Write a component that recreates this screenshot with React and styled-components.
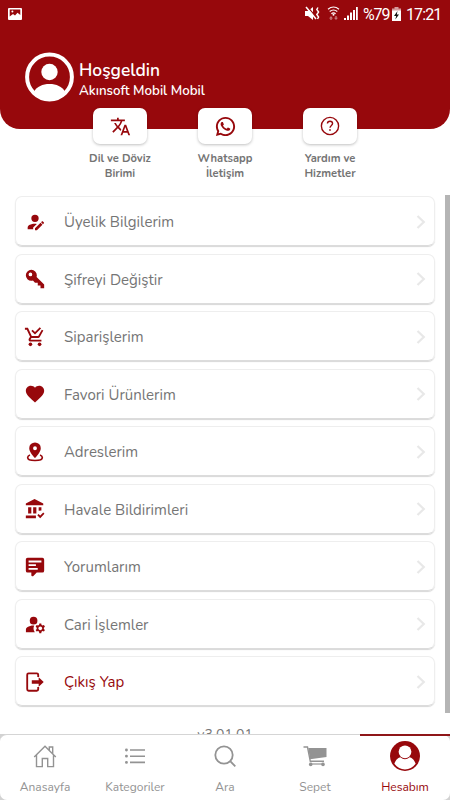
import styled, { createGlobalStyle } from 'styled-components';
import { MdTranslate, MdManageAccounts } from 'react-icons/md';
import { RiWhatsappLine } from 'react-icons/ri';

const red = '#97080c';

const GlobalStyle = createGlobalStyle`
  * {
    box-sizing: border-box;
  }

  body {
    margin: 0;
    background: #fff;
    font-family: Nunito, Lato, 'Noto Sans', sans-serif;
  }
`;

const Screen = styled.div`
  display: flex;
  flex-direction: column;
  width: 450px;
  height: 800px;
  overflow: hidden;
  background: #fff;
`;

const Header = styled.header`
  flex: none;
  height: 129px;
  background: ${red};
  border-radius: 0 0 20px 20px;
  color: #fff;
`;

const StatusBar = styled.div`
  display: flex;
  justify-content: space-between;
  height: 28px;
  padding: 0 9px 0 8px;
  font-family: Roboto, sans-serif;
  font-size: 16px;
  line-height: 28px;

  svg {
    display: block;
  }
`;

const StatusGroup = styled.div`
  display: flex;
  align-items: center;
`;

const StatusText = styled.span`
  width: ${(props) => props.$width}px;
  letter-spacing: ${(props) => props.$track}px;
  margin-left: ${(props) => props.$gap}px;
  padding-top: 1px;
  white-space: nowrap;
`;

const Welcome = styled.div`
  display: flex;
  align-items: center;
  gap: 5px;
  padding: 24px 0 0 25px;

  h1,
  p {
    margin: 0;
    white-space: nowrap;
  }

  h1 {
    padding-top: 4px;
    font-size: 17.4px;
    font-weight: 600;
    line-height: 22px;
  }

  p {
    padding-top: 1px;
    font-size: 13.3px;
    font-weight: 600;
    line-height: 18px;
  }
`;

const Shortcuts = styled.nav`
  display: flex;
  flex: none;
  justify-content: center;
  gap: 15px;
  height: 87px;
  margin-top: -21px;
`;

const Shortcut = styled.div`
  display: flex;
  flex-direction: column;
  align-items: center;
  width: 90px;
  color: #747474;
  font-size: 11.2px;
  font-weight: 700;
  line-height: 15px;
  text-align: center;
`;

const ShortcutButton = styled.div`
  display: flex;
  align-items: center;
  justify-content: center;
  width: 54px;
  height: 36px;
  margin-bottom: 7px;
  border-radius: 7px;
  background: #fff;
  box-shadow: 0 1px 3px rgba(0, 0, 0, 0.25);
  color: ${red};
`;

const Content = styled.main`
  display: flex;
  flex: none;
  justify-content: space-between;
  height: 539px;
  padding-left: 15px;
  overflow: hidden;
`;

const Menu = styled.div`
  display: flex;
  flex-direction: column;
  gap: 7.5px;
  width: 420px;
  padding-top: 1px;
`;

const MenuItem = styled.div`
  display: flex;
  flex: none;
  align-items: center;
  height: 50px;
  padding: 1px 8px 0 9px;
  border: 1px solid #eee;
  border-bottom-color: #dcdcdc;
  border-radius: 7px;
  box-shadow: 0 1px 1px rgba(0, 0, 0, 0.16);
  color: ${(props) => (props.$active ? red : '#757575')};
  font-size: 15px;

  > svg:first-child {
    flex: none;
    margin-left: -1px;
    color: ${red};
  }
`;

const MenuLabel = styled.span`
  flex: 1;
  margin-left: 18px;
  padding-top: 1px;
`;

const Version = styled.div`
  margin-top: 12px;
  color: #777;
  font-size: 14px;
  line-height: 18px;
  text-align: center;
`;

const Scrollbar = styled.div`
  width: 5px;
  height: 518px;
  background: #b5b5b5;
`;

const TabBar = styled.footer`
  display: flex;
  flex: none;
  height: 66px;
  border-top: 1px solid #d5d5d5;
  border-radius: 7px;
  background: #fff;
  box-shadow: 0 0 0 8px #d2d2d2;
  clip-path: inset(0);
`;

const Tab = styled.div`
  display: flex;
  flex-direction: column;
  align-items: center;
  width: 90px;
  margin-top: -1px;
  border-top: 2px solid ${(props) => (props.$active ? '#8f1619' : '#d5d5d500')};
  color: ${(props) => (props.$active ? red : '#939393')};
  font-size: 12px;
  line-height: 16px;
`;

const TabIcon = styled.div`
  display: flex;
  align-items: center;
  justify-content: center;
  height: 40px;
  margin-bottom: 3px;
`;

const Icon = ({ size = 22, children, ...rest }) => (
  <svg width={size} height={size} viewBox='0 0 24 24' fill='currentColor' {...rest}>
    {children}
  </svg>
);

const line = { fill: 'none', stroke: 'currentColor' };

const menuItems = [
  {
    label: 'Üyelik Bilgilerim',
    icon: (
      <path d='M21.7,13.35L20.7,14.35L18.65,12.3L19.65,11.3C19.86,11.09 20.21,11.09 20.42,11.3L21.7,12.58C21.91,12.79 21.91,13.14 21.7,13.35M12,18.94L18.06,12.88L20.11,14.93L14.06,21H12V18.94M12,14C7.58,14 4,15.79 4,18V20H10V18.11L14,14.11C13.34,14.03 12.67,14 12,14M12,4A4,4 0 0,0 8,8A4,4 0 0,0 12,12A4,4 0 0,0 16,8A4,4 0 0,0 12,4Z' />
    ),
  },
  {
    label: 'Şifreyi Değiştir',
    icon: (
      <path d='M22,18V22H18V19H15V16H12L9.74,13.74C9.19,13.91 8.61,14 8,14A6,6 0 0,1 2,8A6,6 0 0,1 8,2A6,6 0 0,1 14,8C14,8.61 13.91,9.19 13.74,9.74L22,18M7,5A2,2 0 0,0 5,7A2,2 0 0,0 7,9A2,2 0 0,0 9,7A2,2 0 0,0 7,5Z' />
    ),
  },
  {
    label: 'Siparişlerim',
    icon: (
      <>
        <path d='M7.2 14.8V14.7L8.1 13H15.5C16.2 13 16.9 12.6 17.2 12L21.1 5L19.4 4L15.5 11H8.5L4.3 2H1V4H3L6.6 11.6L5.2 14C5.1 14.3 5 14.6 5 15C5 16.1 5.9 17 7 17H19V15H7.4C7.3 15 7.2 14.9 7.2 14.8M12 9.3L8 5.4L9.4 4L12 6.6L17.2 1.4L18.6 2.8Z' />
        <circle cx='7' cy='20' r='2' />
        <circle cx='17' cy='20' r='2' />
      </>
    ),
  },
  {
    label: 'Favori Ürünlerim',
    icon: (
      <path d='M12,21.35L10.55,20.03C5.4,15.36 2,12.27 2,8.5C2,5.41 4.42,3 7.5,3C9.24,3 10.91,3.81 12,5.08C13.09,3.81 14.76,3 16.5,3C19.58,3 22,5.41 22,8.5C22,12.27 18.6,15.36 13.45,20.03L12,21.35Z' />
    ),
  },
  {
    label: 'Adreslerim',
    icon: (
      <>
        <path
          fillRule='evenodd'
          d='M12 1.5A6.3 6.3 0 0 0 5.7 7.8C5.7 12.5 12 18.5 12 18.5S18.3 12.5 18.3 7.8A6.3 6.3 0 0 0 12 1.5ZM12 5.8A2.1 2.1 0 1 1 12 10A2.1 2.1 0 0 1 12 5.8Z'
        />
        <path
          {...line}
          strokeWidth='1.8'
          d='M6.5 15.2C4.5 16 4 17.2 4 18C4 20 7.5 21.3 12 21.3S20 20 20 18C20 17.2 19.5 16 17.5 15.2'
        />
      </>
    ),
  },
  {
    label: 'Havale Bildirimleri',
    icon: (
      <path d='M11.5 1L2 6V8H21V6ZM4.5 10H8V17H4.5ZM10 10H13.5V17H10ZM16 10H19V13.5L16 14ZM2 19H13V22H2ZM17.7 22L14.5 18.8L15.9 17.4L17.7 19.2L21 15.8L22.3 17.3Z' />
    ),
  },
  {
    label: 'Yorumlarım',
    icon: (
      <path d='M9,22A1,1 0 0,1 8,21V18H4A2,2 0 0,1 2,16V4C2,2.89 2.9,2 4,2H20A2,2 0 0,1 22,4V16A2,2 0 0,1 20,18H13.9L10.2,21.71C10,21.9 9.75,22 9.5,22H9M5,5V7H19V5H5M5,9V11H13V9H5M5,13V15H15V13H5Z' />
    ),
  },
  { label: 'Cari İşlemler', custom: <MdManageAccounts size={23} style={{ marginRight: -1 }} /> },
  {
    label: 'Çıkış Yap',
    active: true,
    icon: (
      <>
        <path {...line} strokeWidth='2' d='M15.5 6.5V4Q15.5 2.5 14 2.5H5Q3.5 2.5 3.5 4V20Q3.5 21.5 5 21.5H14Q15.5 21.5 15.5 20V17.5' />
        <path d='M8.5 10H16V6.8L21.5 12L16 17.2V14H8.5Z' />
      </>
    ),
  },
];

const tabs = [
  {
    label: 'Anasayfa',
    icon: (
      <Icon size={24} {...line} strokeWidth='1.4'>
        <path d='M1.2 13L12 2.2L22.8 13M3.5 11V22.6H9.3V14.5H14.7V22.6H20.5V11M16.3 6.5V3H19.7V9.5' />
      </Icon>
    ),
  },
  {
    label: 'Kategoriler',
    icon: (
      <Icon size={24} {...line} strokeWidth='1.6'>
        <path d='M7 6H22M7 12.2H22M7 18.4H22' />
        <path strokeWidth='2.8' strokeLinecap='round' d='M3.4 6H3.5M3.4 12.2H3.5M3.4 18.4H3.5' />
      </Icon>
    ),
  },
  {
    label: 'Ara',
    icon: (
      <Icon size={24} {...line} strokeWidth='1.8'>
        <circle cx='11' cy='11' r='8.7' />
        <path d='M17.2 17.2L22.3 22.3' />
      </Icon>
    ),
  },
  {
    label: 'Sepet',
    icon: (
      <Icon size={24}>
        <path d='M5.3 4H23.5V13L7 15.2Z' />
        <path {...line} strokeWidth='1.4' d='M.5 3H4.5L7.3 17.3H21' />
        <circle cx='7.7' cy='20.4' r='1.8' />
        <circle cx='20' cy='20.4' r='1.8' />
        <path {...line} strokeWidth='1.2' d='M8 20H20' />
      </Icon>
    ),
  },
  {
    label: 'Hesabım',
    active: true,
    icon: (
      <Icon size={30}>
        <circle cx='12' cy='12' r='12' />
        <path fill='#fff' d='M3.5 18.2C4.6 14.7 7 13.2 8.3 13Q12 16.1 15.7 13C17 13.2 19.4 14.7 20.5 18.2C18.2 21.2 15.4 22.7 12 22.7S5.8 21.2 3.5 18.2Z' />
        <circle cx='12' cy='8.6' r='5.1' fill='#fff' />
      </Icon>
    ),
  },
];

const StatusIcons = () => (
  <svg width='53' height='16' viewBox='0 0 53 16' fill='#fff'>
    <path d='M0 5H3L8 1V14L3 10H0Z' />
    <path stroke={red} strokeWidth='1.2' d='M2.5 1L12 12' />
    <path stroke='#fff' strokeWidth='1.5' d='M1 1L11 13' />
    <path fill='none' stroke='#fff' strokeWidth='1.4' d='M13 1.5L11.8 3.5L13.6 6L11.8 8.5L13.6 11L12.5 13' />
    <g fill='none' stroke='#fff' strokeWidth='1.2'>
      <path d='M23 3.2Q28.5 -1.2 34 3.2M24.7 5.5Q28.5 2.5 32.3 5.5M26.4 7.7Q28.5 6 30.6 7.7' />
    </g>
    <circle cx='28.5' cy='8.8' r='1' />
    <path opacity='.45' d='M26 10L28 12.4H26.7V14H25.3V12.4H24ZM30.3 10H31.7V11.7H33L31 14L29 11.7H30.3Z' />
    <path d='M39 12H41V14H39ZM42 9.5H44V14H42ZM45 6.5H47V14H45ZM48 4H50V14H48ZM51 1H52.8V14H51Z' />
  </svg>
);

const App = () => {
  return (
    <Screen>
      <GlobalStyle />
      <Header>
        <StatusBar>
          <StatusGroup>
            <svg width='14' height='14' viewBox='0 0 14 14'>
              <rect y='1' width='14' height='12' rx='1' fill='#fff' />
              <path fill={red} d='M1.7 2.6H12.3V8L9.5 5.8L7 8.5L5 7L1.7 9.5Z' />
              <circle cx='4.4' cy='4.6' r='1' fill='#fff' />
            </svg>
          </StatusGroup>
          <StatusGroup>
            <StatusIcons />
            <StatusText $gap={5} $width={25} $track={-1.1}>%79</StatusText>
            <svg width='9' height='14' viewBox='0 0 9 14' style={{ marginLeft: 4 }}>
              <path fill='#fff' opacity='.6' d='M2.5 0H6.5V1.5H9V4H0V1.5H2.5Z' />
              <path fill='#fff' d='M0 3.5H9V14H0Z' />
              <path fill='#111' d='M5.5 4L2 9H4.2L3.3 12.5L7 7.6H4.8Z' />
            </svg>
            <StatusText $gap={5} $width={35} $track={-0.9}>17:21</StatusText>
          </StatusGroup>
        </StatusBar>
        <Welcome>
          <svg width='49' height='50' viewBox='0 0 49 50' fill='#fff'>
            <circle cx='24.5' cy='25' r='22.4' fill='none' stroke='#fff' strokeWidth='4' />
            <circle cx='24.5' cy='20' r='8.2' />
            <path d='M9 39.5C12 34.5 17.5 32 24.5 32S37 34.5 40 39.5C36 44 31 47 24.5 47S13 44 9 39.5Z' />
          </svg>
          <div>
            <h1>Hoşgeldin</h1>
            <p>Akınsoft Mobil Mobil</p>
          </div>
        </Welcome>
      </Header>
      <Shortcuts>
        <Shortcut>
          <ShortcutButton>
            <MdTranslate size={21} />
          </ShortcutButton>
          Dil ve Döviz
          <br />
          Birimi
        </Shortcut>
        <Shortcut>
          <ShortcutButton>
            <RiWhatsappLine size={23} />
          </ShortcutButton>
          Whatsapp
          <br />
          İletişim
        </Shortcut>
        <Shortcut>
          <ShortcutButton>
            <Icon size={22} {...line} strokeWidth='1.5'>
              <circle cx='12' cy='12' r='9.4' />
              <path d='M9.2 9.4C9.2 7.6 10.4 6.8 12 6.8S14.8 7.8 14.8 9.4C14.8 11.3 12 11.5 12 14' />
              <path strokeWidth='1.8' d='M12 15.5V17.3' />
            </Icon>
          </ShortcutButton>
          Yardım ve
          <br />
          Hizmetler
        </Shortcut>
      </Shortcuts>
      <Content>
        <Menu>
          {menuItems.map((item) => (
            <MenuItem key={item.label} $active={item.active}>
              {item.custom || <Icon>{item.icon}</Icon>}
              <MenuLabel>{item.label}</MenuLabel>
              <svg width='10' height='14' viewBox='0 0 10 14' fill='none' stroke='#e8e8e8' strokeWidth='2.2'>
                <path d='M1.5 1L7.8 7L1.5 13' />
              </svg>
            </MenuItem>
          ))}
          <Version>v3.01.01</Version>
        </Menu>
        <Scrollbar />
      </Content>
      <TabBar>
        {tabs.map((tab) => (
          <Tab key={tab.label} $active={tab.active}>
            <TabIcon>{tab.icon}</TabIcon>
            <span>{tab.label}</span>
          </Tab>
        ))}
      </TabBar>
    </Screen>
  );
};

export default App;
